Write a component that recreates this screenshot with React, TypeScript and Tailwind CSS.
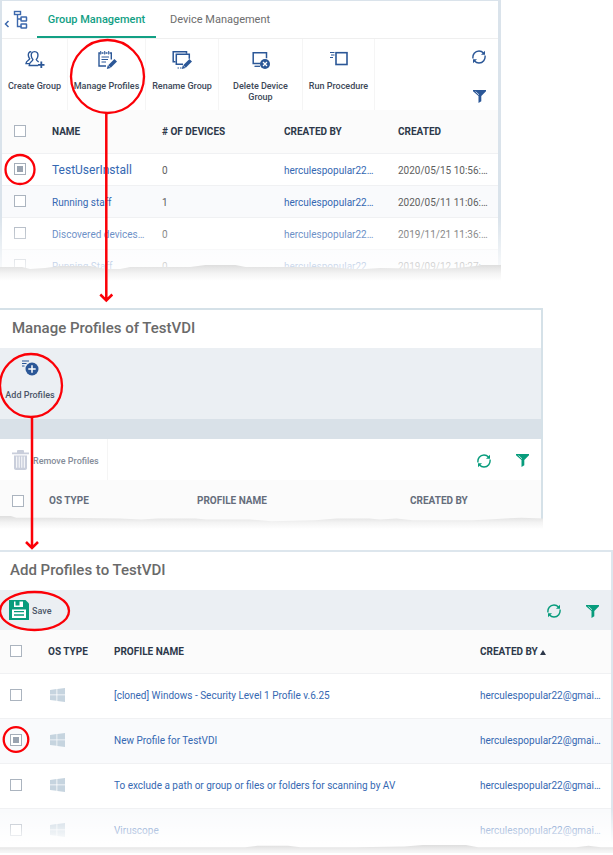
import type { ReactNode } from 'react';

const groups = [
  { name: 'TestUserInstall', devices: 0, by: 'herculespopular22…', created: '2020/05/15 10:56:…', checked: true },
  { name: 'Running staff', devices: 1, by: 'herculespopular22…', created: '2020/05/11 11:06:…', checked: false },
  { name: 'Discovered devices…', devices: 0, by: 'herculespopular22…', created: '2019/11/21 11:36:…', checked: false },
  { name: 'Running Staff', devices: 0, by: 'herculespopular22…', created: '2019/09/12 10:27:…', checked: false },
];

const profiles = [
  { name: '[cloned] Windows - Security Level 1 Profile v.6.25', checked: false },
  { name: 'New Profile for TestVDI', checked: true },
  { name: 'To exclude a path or group or files or folders for scanning by AV', checked: false },
  { name: 'Viruscope', checked: false },
];

function TreeIcon() {
  return (
    <svg width="24" height="20" viewBox="0 0 24 20" fill="none" stroke="#3c68ad">
      <path d="M4.500 11l-3 3 3 3" strokeWidth="1.500" />
      <rect x="10.500" y="1.500" width="6" height="3" strokeWidth="1.400" />
      <path d="M13.500 5v11.500h4M13.500 9h4" strokeWidth="1.400" />
      <rect x="17" y="7" width="5.500" height="4" rx=".5" strokeWidth="1.500" />
      <rect x="17" y="14" width="5.500" height="4" rx=".5" strokeWidth="1.500" />
    </svg>
  );
}

function CreateGroupIcon() {
  return (
    <svg width="20" height="20" viewBox="0 0 20 20" fill="none" stroke="#2b5797" strokeWidth="1.400">
      <path d="M6.300 1.800C4 1.600 3 3.300 3.400 5.800c.2 1.400.8 2.200 1.300 2.900C4.500 10.300 1.200 10.400 1 13.600h4" />
      <path d="M9.600 1.600c-2.700 0-3.600 1.900-3.300 4.400.2 1.600.8 2.700 1.600 3.500-.2 2.200-3.600 2.200-3.700 6h9M9.600 1.600c2.700 0 3.600 1.900 3.300 4.400-.2 1.600-.8 2.700-1.600 3.500.2 1.200 1.400 1.700 2.400 2.300" />
      <path d="M16.300 11.500v6.500M13 14.800h6.500" strokeWidth="1.800" />
    </svg>
  );
}

function Pencil() {
  return (
    <>
      <path d="M18.700 10.200l-6.200 6.300" stroke="#2b5797" strokeWidth="3.600" />
      <path d="M10.800 15.300l2.700 2.700-3.700.9z" fill="#2b5797" stroke="none" />
    </>
  );
}

function ManageProfilesIcon() {
  return (
    <svg width="20" height="20" viewBox="0 0 20 20" fill="none" stroke="#2b5797" strokeWidth="1.400">
      <path d="M3 3H2v13h7M4.500 3h2M8.500 3h2M12.500 3h1.800v6.500" />
      <path d="M3.700 1v3.500M7.700 1v3.500M11.700 1v3.500M4.500 7h7.500M4.500 9.500h6.500M4.500 12h4.500" strokeWidth="1" />
      <Pencil />
    </svg>
  );
}

function RenameGroupIcon() {
  return (
    <svg width="20" height="20" viewBox="0 0 20 20" fill="none" stroke="#2b5797" strokeWidth="1.500">
      <path d="M3.500 11.800H1.200V1.700h13.300v2" />
      <path d="M11 14.300H4.300V4.300h13v4.500" />
      <path d="M5.500 18h1.500M8 18h1.500" strokeWidth="1.200" />
      <Pencil />
    </svg>
  );
}

function DeleteGroupIcon() {
  return (
    <svg width="20" height="20" viewBox="0 0 20 20" fill="none" stroke="#2b5797" strokeWidth="1.500">
      <path d="M9.500 13.500H2.200V2.700h13.300v5.500" />
      <path d="M3.500 16.300h5.500" strokeWidth="1.300" />
      <circle cx="14" cy="14" r="5" fill="#2b5797" stroke="none" />
      <path d="M12 12l4 4M16 12l-4 4" stroke="#fff" strokeWidth="1.300" />
    </svg>
  );
}

function RunProcedureIcon() {
  return (
    <svg width="20" height="20" viewBox="0 0 20 20" fill="none" stroke="#2b5797">
      <rect x="7" y="2.700" width="11" height="11.800" strokeWidth="1.600" />
      <path d="M1 2.500h4.500M2 5h3.500M1 7.500h3" strokeWidth="1.200" />
    </svg>
  );
}

function AddProfilesIcon() {
  return (
    <svg width="18" height="18" viewBox="0 0 18 18" fill="none" stroke="#2b5797">
      <path d="M1 2h7M1 4.500h4.500M1 7h2.500" strokeWidth="1" />
      <circle cx="11" cy="10" r="6.500" fill="#2b5797" stroke="none" />
      <path d="M11 6.300v7.400M7.300 10h7.400" stroke="#fff" strokeWidth="1.500" />
    </svg>
  );
}

function TrashIcon() {
  return (
    <svg width="17" height="20" viewBox="0 0 17 20" fill="#c9cedb">
      <path d="M0 2.500h5V1.200C5 .5 5.500 0 6.200 0h4.600c.7 0 1.200.5 1.200 1.200v1.300h5v1.700H0z" />
      <path
        fillRule="evenodd"
        d="M2 5.500h13V18c0 1-.8 2-2 2H4c-1.200 0-2-1-2-2zM4.200 6.500v11.300h1V6.500zM6.700 6.500v11.300h1V6.500zM9.300 6.500v11.300h1V6.500zM11.800 6.500v11.300h1V6.500z"
      />
    </svg>
  );
}

function SaveIcon() {
  return (
    <svg width="20" height="20" viewBox="0 0 20 20">
      <path d="M0 0h16.500L20 3.500V20H0z" fill="#079c7c" />
      <path d="M5 1.500h9v5.500H5z" fill="#fff" />
      <path d="M6.500 1h4v4.500h-4z" fill="#079c7c" />
      <path d="M3 9.500h14V18H3z" fill="#fff" />
      <path d="M5 11.700h10M5 15h10" stroke="#079c7c" strokeWidth="1.300" />
    </svg>
  );
}

function RefreshIcon() {
  return (
    <svg width="14" height="14" viewBox="0 0 14 14" fill="none" stroke="currentColor" strokeWidth="1.400">
      <path d="M1 8.500C.3 4.500 3 1 7 1c1.800 0 3.300.7 4.500 2" />
      <path d="M13 5.500c.7 4-2 7.500-6 7.500-1.800 0-3.300-.7-4.500-2" />
      <path d="M13 .8v4H9zM1 13.200v-4h4z" fill="currentColor" stroke="none" />
    </svg>
  );
}

function FilterIcon() {
  return (
    <svg width="13" height="13" viewBox="0 0 13 13" fill="currentColor">
      <path d="M0 0h13v1.200L8.300 6v5.200L5.500 13V6L0 1.200z" />
      <path d="M2.500 1.500l3.500 3.300" stroke="#fff" strokeWidth=".7" />
    </svg>
  );
}

function WindowsIcon() {
  return (
    <svg width="15" height="14" viewBox="0 0 15 14" fill="#c6d4df">
      <path d="M0 2l6.500-.9v5.400H0zM7.300 1L15 0v6.500H7.300zM0 7.300h6.500v5.500L0 12zM7.300 7.300H15V14l-7.700-1z" />
    </svg>
  );
}

function ToolButton({ label, icon, className }: { label: string; icon: ReactNode; className: string }) {
  return (
    <button
      className={`flex flex-col items-center border-r border-[#f5f5f5] pt-[11px] text-center text-[9px] leading-[11px] font-medium text-[#3d4858] ${className}`}
    >
      {icon}
      <span className="mt-[11px]">{label}</span>
    </button>
  );
}

function Check({ label, checked = false }: { label: string; checked?: boolean }) {
  return (
    <input
      type="checkbox"
      aria-label={label}
      defaultChecked={checked}
      className="block size-3 appearance-none border border-[#abb4bf] bg-white checked:border-[#a5aeb9] checked:bg-[#99a3b0] checked:shadow-[inset_0_0_0_2px_white]"
    />
  );
}

function ListActions() {
  return (
    <div className="ml-auto flex items-center gap-[25px] pt-0.5 pr-3 text-[#079c7c]">
      <button aria-label="Refresh">
        <RefreshIcon />
      </button>
      <button aria-label="Filter">
        <FilterIcon />
      </button>
    </div>
  );
}

// Ragged paper edge that closes a cut-off panel
function TornEdge({ id, d, className }: { id: string; d: string; className: string }) {
  return (
    <svg
      className={`absolute inset-x-0 w-full ${className}`}
      viewBox="0 0 500 16"
      preserveAspectRatio="none"
      aria-hidden="true"
    >
      <defs>
        <linearGradient id={id} x1="0" y1="0" x2="0" y2="1">
          <stop offset="0" stopColor="#dedede" />
          <stop offset="0.5" stopColor="#f3f3f3" />
          <stop offset="1" stopColor="#ffffff" />
        </linearGradient>
      </defs>
      <path d={d} fill={`url(#${id})`} />
    </svg>
  );
}

function Annotations() {
  return (
    <svg
      className="pointer-events-none absolute top-0 left-0"
      width="160"
      height="760"
      viewBox="0 0 160 760"
      fill="none"
      stroke="#fb0007"
      strokeWidth="2.300"
      aria-hidden="true"
    >
      <circle cx="107.500" cy="76.500" r="36.500" />
      <path d="M106.300 113v187M100.300 294.500l6 6 6-6" strokeWidth="2.500" />
      <circle cx="20" cy="169.500" r="14.500" />
      <ellipse cx="31" cy="385.500" rx="31" ry="31.500" />
      <path d="M32 417v131M26 542l6 6 6-6" strokeWidth="2.500" />
      <ellipse cx="34.500" cy="611" rx="34.500" ry="19" />
      <circle cx="16" cy="739.500" r="12.300" />
    </svg>
  );
}

function GroupPanel() {
  return (
    <section className="relative mr-28">
      <div className="border-t border-r-[3px] border-l-2 border-[#dae3eb]">
        <nav className="flex h-[38px] border-b border-[#efefef] text-[11px]">
          <button aria-label="Toggle group tree" className="w-[35px] pl-0.5">
            <TreeIcon />
          </button>
          <button className="w-[119px] border-b-2 border-[#12a084] pt-1 font-medium text-[#12a084]">
            Group Management
          </button>
          <button className="ml-3.5 pt-0.5 text-[#6d6d6d]">Device Management</button>
        </nav>

        <div className="flex h-[71px]">
          <ToolButton label="Create Group" icon={<CreateGroupIcon />} className="w-[66px]" />
          <ToolButton label="Manage Profiles" icon={<ManageProfilesIcon />} className="w-[78px]" />
          <ToolButton label="Rename Group" icon={<RenameGroupIcon />} className="w-[73px]" />
          <ToolButton label="Delete Device Group" icon={<DeleteGroupIcon />} className="w-[84px] px-3" />
          <ToolButton label="Run Procedure" icon={<RunProcedureIcon />} className="w-[72px]" />
          <div className="ml-auto flex flex-col items-center justify-between pt-[11px] pr-3 pb-[7px] text-[#2b5797]">
            <button aria-label="Refresh">
              <RefreshIcon />
            </button>
            <button aria-label="Filter">
              <FilterIcon />
            </button>
          </div>
        </div>

        <table className="w-full table-fixed text-left text-[10px]">
          <colgroup>
            <col className="w-[50px]" />
            <col className="w-[110px]" />
            <col className="w-[122px]" />
            <col className="w-[114px]" />
            <col />
          </colgroup>
          <thead>
            <tr className="h-[43px] bg-[#fbfbfb] text-[#2d384a]">
              <th className="pl-3">
                <Check label="Select all groups" />
              </th>
              <th>NAME</th>
              <th># OF DEVICES</th>
              <th>CREATED BY</th>
              <th>CREATED</th>
            </tr>
          </thead>
          <tbody>
            {groups.map((g) => (
              <tr key={g.name} className="h-8 border-t border-[#f0f1f3] text-[#5e5e5e] even:bg-[#f9fafc]">
                <td className="pl-3">
                  <Check label={g.name} checked={g.checked} />
                </td>
                <td className="pt-0.5 whitespace-nowrap text-[#3568b2]">
                  <a href="#" className={g.checked ? 'text-xs' : ''}>
                    {g.name}
                  </a>
                </td>
                <td className="pt-0.5">{g.devices}</td>
                <td className="pt-0.5 text-[#3568b2]">
                  <a href="#">{g.by}</a>
                </td>
                <td className="pt-0.5 whitespace-nowrap">{g.created}</td>
              </tr>
            ))}
          </tbody>
        </table>
      </div>
      <div className="pointer-events-none absolute inset-x-0 bottom-0 h-16 bg-linear-to-b from-transparent to-white" />
      <TornEdge
        id="tear-groups"
        className="bottom-0 h-4"
        d="M0 2L22 2 30 4 45 3 60 1 90 1 105 4 120 4 130 2 190 2 205 0 235 0 245 2 290 2 330 2 350 4 365 4 380 3 430 4 455 3 475 1 480 0 500 0V16H0z"
      />
    </section>
  );
}

function ManagePanel() {
  return (
    <section className="relative mt-[27px] mr-[70px]">
      <div className="border-t-2 border-r-2 border-[#d5e1e8]">
        <h2 className="flex h-[38px] items-center pb-0.5 pl-3 text-[15px] font-medium text-[#6a6a6a]">
          Manage Profiles of TestVDI
        </h2>
        <div className="h-[71px] bg-[#ebeff3]">
          <button className="flex w-[60px] flex-col items-center pt-[11px] text-[9px] leading-[11px] font-medium whitespace-nowrap text-[#4b5668]">
            <AddProfilesIcon />
            <span className="mt-[13px]">Add Profiles</span>
          </button>
        </div>
        <div className="h-5 bg-[#d9e1e8]" />
        <div className="flex h-[41px]">
          <button className="flex w-[108px] items-center border-r border-[#f5f5f5] pl-3 text-[9px] font-medium whitespace-nowrap text-[#858c99]">
            <TrashIcon />
            <span className="mt-1 ml-1">Remove Profiles</span>
          </button>
          <ListActions />
        </div>
        <table className="w-full table-fixed text-left text-[10px] text-[#656d7b]">
          <colgroup>
            <col className="w-[49px]" />
            <col className="w-[148px]" />
            <col className="w-[213px]" />
            <col />
          </colgroup>
          <thead>
            <tr className="h-[45px] bg-[#fbfbfb]">
              <th className="pb-1 pl-3">
                <Check label="Select all assigned profiles" />
              </th>
              <th className="pb-1">OS TYPE</th>
              <th className="pb-1">PROFILE NAME</th>
              <th className="pb-1">CREATED BY</th>
            </tr>
          </thead>
        </table>
      </div>
      <TornEdge
        id="tear-manage"
        className="-bottom-1 h-3.5"
        d="M0 1L10 1 15 3 50 3 110 4 130 5 145 4 180 4 190 5 230 5 250 7 290 6 310 4 340 4 350 5 365 4 380 6 400 6 435 6 450 5 465 4 480 3 500 4V16H0z"
      />
    </section>
  );
}

function AddPanel() {
  return (
    <section className="relative mt-[25px]">
      <div className="border-t-2 border-r-2 border-[#dde6ed]">
        <h2 className="flex h-[38px] items-center pb-0.5 pl-2.5 text-[15px] font-medium text-[#6a6a6a]">
          Add Profiles to TestVDI
        </h2>
        <div className="flex h-10 items-center bg-[#ebeff3]">
          <button className="flex items-center pl-[9px] text-[9px] font-medium text-[#4b5668]">
            <SaveIcon />
            <span className="mt-1 ml-[3px]">Save</span>
          </button>
          <ListActions />
        </div>
        <table className="w-full table-fixed text-left text-[10px]">
          <colgroup>
            <col className="w-12" />
            <col className="w-[66px]" />
            <col />
            <col className="w-[131px]" />
          </colgroup>
          <thead>
            <tr className="h-[43px] bg-[#fbfbfb] text-[#2d384a]">
              <th className="pl-2.5">
                <Check label="Select all profiles" />
              </th>
              <th>OS TYPE</th>
              <th>PROFILE NAME</th>
              <th>
                <button className="flex items-center gap-0.5 font-bold">
                  CREATED BY
                  <svg className="mt-0.5" width="6" height="5" viewBox="0 0 6 5" fill="#2d384a">
                    <path d="M3 0l3 5H0z" />
                  </svg>
                </button>
              </th>
            </tr>
          </thead>
          <tbody>
            {profiles.map((p) => (
              <tr key={p.name} className="h-[45px] border-t border-[#f0f1f3] text-[#3568b2] even:bg-[#f9fafc]">
                <td className="pb-0.5 pl-2.5">
                  <Check label={p.name} checked={p.checked} />
                </td>
                <td className="pb-0.5 pl-0.5">
                  <WindowsIcon />
                </td>
                <td>
                  <a href="#">{p.name}</a>
                </td>
                <td>
                  <a href="#">herculespopular22@gmai…</a>
                </td>
              </tr>
            ))}
          </tbody>
        </table>
      </div>
      <div className="pointer-events-none absolute inset-x-0 bottom-0 h-12 bg-linear-to-b from-transparent from-10% to-white to-80%" />
      <TornEdge
        id="tear-add"
        className="-bottom-1 h-3"
        d="M0 3L200 3 210 1 235 1 245 3 290 3 330 2 345 0 380 0 390 3 470 3 480 1 490 3 500 3V16H0z"
      />
    </section>
  );
}

export default function App() {
  return (
    <main className="relative overflow-hidden bg-white font-[Roboto,'Liberation_Sans',sans-serif]">
      <GroupPanel />
      <ManagePanel />
      <AddPanel />
      <Annotations />
    </main>
  );
}
